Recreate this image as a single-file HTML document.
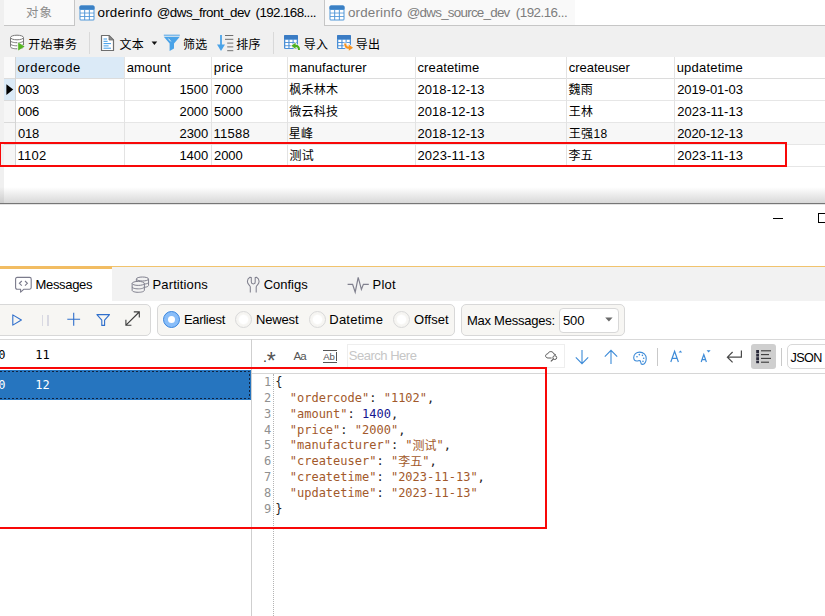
<!DOCTYPE html>
<html><head><meta charset="utf-8"><title>orderinfo</title>
<style>
html,body{margin:0;padding:0;}
body{width:825px;height:616px;position:relative;overflow:hidden;background:#fff;font-family:"Liberation Sans","Noto Sans CJK SC",sans-serif;font-size:13px;color:#000;}
.a{position:absolute;box-sizing:border-box;}
.t{position:absolute;white-space:nowrap;line-height:20px;height:20px;}
.c{position:absolute;white-space:pre;font-family:"DejaVu Sans Mono","Liberation Mono","Noto Sans CJK SC",monospace;font-size:12px;line-height:16px;height:16px;}
.g{width:15.6px;text-align:right;color:#909090;}
.k{color:#a2592b}.j{position:relative;top:1px}.n{color:#15158f}.p{color:#222}
svg{position:absolute;overflow:visible;}
</style></head><body>
<!-- ===== top tab bar ===== -->
<div class="a" style="left:0;top:0;width:825px;height:26px;background:#fff;border-bottom:1px solid #c6c6c6;"></div>
<div class="a" style="left:0;top:0;width:4px;height:204px;background:#f0f0f0;"></div>
<div class="a" style="left:4px;top:0;width:71px;height:26px;background:#f9f9f9;border-right:1px solid #c6c6c6;border-bottom:1px solid #c6c6c6;"></div>
<div class="a" style="left:75px;top:0;width:249px;height:26px;background:#f0f0f0;"></div>
<div class="a" style="left:324px;top:0;width:251px;height:26px;background:#f9f9f9;border-left:1px solid #c6c6c6;border-bottom:1px solid #c6c6c6;"></div>
<!-- table icons in tabs -->
<svg style="left:79px;top:5px;" width="16" height="16" viewBox="0 0 16 16"><rect x="0.5" y="0.5" width="15" height="15" rx="1.5" fill="#5197d8"/><path d="M0.5 4.3 V2 Q0.5 0.5 2 0.5 H14 Q15.5 0.5 15.5 2 V4.3 Z" fill="#3b80c4"/><g fill="#fff"><rect x="1.50" y="5.00" width="3.67" height="2.6"/><rect x="6.17" y="5.00" width="3.67" height="2.6"/><rect x="10.83" y="5.00" width="3.67" height="2.6"/><rect x="1.50" y="8.45" width="3.67" height="2.6"/><rect x="6.17" y="8.45" width="3.67" height="2.6"/><rect x="10.83" y="8.45" width="3.67" height="2.6"/><rect x="1.50" y="11.90" width="3.67" height="2.6"/><rect x="6.17" y="11.90" width="3.67" height="2.6"/><rect x="10.83" y="11.90" width="3.67" height="2.6"/></g></svg>
<svg style="left:329px;top:5px;" width="16" height="16" viewBox="0 0 16 16"><rect x="0.5" y="0.5" width="15" height="15" rx="1.5" fill="#5197d8"/><path d="M0.5 4.3 V2 Q0.5 0.5 2 0.5 H14 Q15.5 0.5 15.5 2 V4.3 Z" fill="#3b80c4"/><g fill="#fff"><rect x="1.50" y="5.00" width="3.67" height="2.6"/><rect x="6.17" y="5.00" width="3.67" height="2.6"/><rect x="10.83" y="5.00" width="3.67" height="2.6"/><rect x="1.50" y="8.45" width="3.67" height="2.6"/><rect x="6.17" y="8.45" width="3.67" height="2.6"/><rect x="10.83" y="8.45" width="3.67" height="2.6"/><rect x="1.50" y="11.90" width="3.67" height="2.6"/><rect x="6.17" y="11.90" width="3.67" height="2.6"/><rect x="10.83" y="11.90" width="3.67" height="2.6"/></g></svg>
<!-- ===== toolbar ===== -->
<div class="a" style="left:0;top:26px;width:825px;height:31px;background:#f0f0f0;"></div>
<div class="a" style="left:89px;top:32px;width:1px;height:22px;background:#d9d9d9;"></div>
<div class="a" style="left:273px;top:32px;width:1px;height:22px;background:#d9d9d9;"></div>
<!-- db + play icon -->
<svg style="left:9px;top:34px;" width="17" height="18" viewBox="0 0 17 18"><path d="M1.5 3.5 V12.6 C1.5 14 4.4 14.8 8 14.8 C11.6 14.8 14.5 14 14.5 12.6 V3.5" fill="#fff" stroke="#787878" stroke-width="1"/><ellipse cx="8" cy="3.5" rx="6.5" ry="2.3" fill="#fff" stroke="#787878" stroke-width="1"/><path d="M1.5 6.6 C1.5 7.9 4.4 8.7 8 8.7 C11.6 8.7 14.5 7.9 14.5 6.6 M1.5 9.7 C1.5 11 4.4 11.8 8 11.8 C11.6 11.8 14.5 11 14.5 9.7" fill="none" stroke="#787878" stroke-width="1"/><path d="M8.2 7.6 L16.4 12.2 L8.2 17 Z" fill="#f0f0f0"/><path d="M9.2 8.6 L15.6 12.4 L9.2 16.6 Z" fill="#55b424"/></svg>
<!-- document icon -->
<svg style="left:100px;top:34px;" width="15" height="18" viewBox="0 0 15 18"><path d="M1.5 1.5 H9 L13.5 6 V16.5 H1.5 Z" fill="#fff" stroke="#6e6e6e" stroke-width="1.2" stroke-linejoin="round"/><path d="M9 1.5 V6 H13.5 Z" fill="#8a8a8a" stroke="#6e6e6e" stroke-width="0.8" stroke-linejoin="round"/><g stroke="#3d9be8" stroke-width="1"><path d="M3.5 5 H7"/><path d="M3.5 7.3 H7.6"/><path d="M3.5 9.6 H11"/><path d="M3.5 11.9 H8.6"/><path d="M3.5 14.2 H11"/></g></svg>
<!-- dropdown arrow -->
<svg style="left:151px;top:41px;" width="7" height="5" viewBox="0 0 7 5"><path d="M0.6 0.6 H6.2 L3.4 4 Z" fill="#111"/></svg>
<!-- filter icon -->
<svg style="left:163px;top:34px;" width="18" height="18" viewBox="0 0 18 18"><path d="M0.8 1.2 H16.8" stroke="#4aa3e8" stroke-width="1" /><path d="M0.8 2.8 H16.8 L11 9.6 V14.6 L6.6 16.9 V9.6 Z" fill="#4aa3e8"/><path d="M5.4 4.6 L7.8 7.4" stroke="#f0f0f0" stroke-width="1"/></svg>
<!-- sort icon -->
<svg style="left:217px;top:34px;" width="17" height="18" viewBox="0 0 17 18"><path d="M4 1 V12" stroke="#4aa3e8" stroke-width="1.8"/><path d="M0 10.6 H8 L4 17 Z" fill="#4aa3e8"/><g stroke="#6f6f6f" stroke-width="1"><path d="M8 1.5 H16.3"/><path d="M8 5.3 H16.3"/><path d="M10.2 9.1 H16.3"/><path d="M10.2 12.9 H16.3"/><path d="M10.2 16.7 H16.3"/></g></svg>
<!-- import icon -->
<svg style="left:284px;top:34px;" width="18" height="18" viewBox="0 0 18 18"><rect x="0" y="1" width="14" height="14" rx="1.3" fill="#4a8fd6"/><path d="M0 5 V2.3 Q0 1 1.3 1 H12.7 Q14 1 14 2.3 V5 Z" fill="#3b7cc4"/><g fill="#fff"><rect x="1.3" y="5.8" width="3.1" height="2.3"/><rect x="5.5" y="5.8" width="3.1" height="2.3"/><rect x="9.6" y="5.8" width="3.1" height="2.3"/><rect x="1.3" y="9.0" width="3.1" height="2.3"/><rect x="5.5" y="9.0" width="3.1" height="2.3"/><rect x="9.6" y="9.0" width="3.1" height="2.3"/><rect x="1.3" y="12.2" width="3.1" height="1.8"/><rect x="5.5" y="12.2" width="3.1" height="1.8"/><rect x="9.6" y="12.2" width="3.1" height="1.8"/></g><path d="M7.4 11.8 L11.6 8.8 V10.8 C14.6 10.8 16.2 12.8 16 15.9 H14 C14 13.9 13.2 12.9 11.6 12.9 V14.9 Z" fill="#4cb01f" stroke="#f0f0f0" stroke-width="1.6" paint-order="stroke" stroke-linejoin="round"/></svg>
<!-- export icon -->
<svg style="left:337px;top:34px;" width="18" height="18" viewBox="0 0 18 18"><rect x="0" y="1" width="14" height="14" rx="1.3" fill="#4a8fd6"/><path d="M0 5 V2.3 Q0 1 1.3 1 H12.7 Q14 1 14 2.3 V5 Z" fill="#3b7cc4"/><g fill="#fff"><rect x="1.3" y="5.8" width="3.1" height="2.3"/><rect x="5.5" y="5.8" width="3.1" height="2.3"/><rect x="9.6" y="5.8" width="3.1" height="2.3"/><rect x="1.3" y="9.0" width="3.1" height="2.3"/><rect x="5.5" y="9.0" width="3.1" height="2.3"/><rect x="9.6" y="9.0" width="3.1" height="2.3"/><rect x="1.3" y="12.2" width="3.1" height="1.8"/><rect x="5.5" y="12.2" width="3.1" height="1.8"/><rect x="9.6" y="12.2" width="3.1" height="1.8"/></g><path d="M7.2 9.4 H9.2 C9.2 11.6 10.2 12.6 11.8 12.6 V10.6 L16 13.7 L11.8 16.8 V14.8 C8.8 14.8 7.2 12.6 7.2 9.4 Z" fill="#f7931e" stroke="#f0f0f0" stroke-width="1.6" paint-order="stroke" stroke-linejoin="round"/></svg>
<!-- ===== grid ===== -->
<div class="a" style="left:4px;top:57px;width:821px;height:110px;background:#fff;"></div>
<div class="a" style="left:4px;top:57px;width:12px;height:21px;background:#fafafa;"></div>
<div class="a" style="left:16px;top:57px;width:108px;height:21px;background:#dbeaf7;"></div>
<div class="a" style="left:4px;top:79px;width:12px;height:21px;background:#dbeaf7;"></div>
<div class="a" style="left:4px;top:101px;width:12px;height:65px;background:#f6f6f6;"></div>
<div class="a" style="left:16px;top:123px;width:809px;height:21px;background:#f7f7f7;"></div>
<!-- horizontal lines -->
<div class="a" style="left:4px;top:78px;width:821px;height:1px;background:#dcdcdc;"></div>
<div class="a" style="left:4px;top:100px;width:821px;height:1px;background:#e6e6e6;"></div>
<div class="a" style="left:4px;top:122px;width:821px;height:1px;background:#e6e6e6;"></div>
<div class="a" style="left:4px;top:144px;width:821px;height:1px;background:#e6e6e6;"></div>
<div class="a" style="left:4px;top:166px;width:821px;height:1px;background:#e6e6e6;"></div>
<div class="a" style="left:4px;top:100px;width:12px;height:1px;background:#dadada;"></div>
<div class="a" style="left:4px;top:122px;width:12px;height:1px;background:#dadada;"></div>
<div class="a" style="left:4px;top:144px;width:12px;height:1px;background:#dadada;"></div>
<!-- vertical lines -->
<div class="a" style="left:15px;top:57px;width:1px;height:109px;background:#d4d4d4;"></div>
<div class="a" style="left:124px;top:57px;width:1px;height:109px;background:#e3e3e3;"></div>
<div class="a" style="left:211px;top:57px;width:1px;height:109px;background:#e3e3e3;"></div>
<div class="a" style="left:287px;top:57px;width:1px;height:109px;background:#e3e3e3;"></div>
<div class="a" style="left:415px;top:57px;width:1px;height:109px;background:#e3e3e3;"></div>
<div class="a" style="left:566px;top:57px;width:1px;height:109px;background:#e3e3e3;"></div>
<div class="a" style="left:674px;top:57px;width:1px;height:109px;background:#e3e3e3;"></div>
<!-- current row marker -->
<svg style="left:6px;top:84px;" width="8" height="12" viewBox="0 0 8 12"><path d="M0.4 0.2 L7.2 5.6 L0.4 11 Z" fill="#000"/></svg>
<!-- ===== bottom of upper window: shadow ===== -->
<div class="a" style="left:4px;top:187px;width:821px;height:16px;background:linear-gradient(#ffffff,#d8d8d8);"></div>
<div class="a" style="left:0;top:187px;width:4px;height:16px;background:linear-gradient(#f0f0f0,#cdcdcd);"></div>
<div class="a" style="left:0;top:203px;width:825px;height:1px;background:#767676;"></div>
<div class="a" style="left:0;top:204px;width:825px;height:1px;background:#e4e4e4;"></div>
<!-- window controls -->
<div class="a" style="left:773px;top:218px;width:10px;height:1px;background:#000;"></div>
<div class="a" style="left:818px;top:213px;width:12px;height:10px;border:1px solid #000;"></div>
<!-- ===== bottom tab bar ===== -->
<div class="a" style="left:0;top:266px;width:825px;height:35px;background:#f2f2f2;border-top:1px solid #f1c36d;"></div>
<div class="a" style="left:0;top:266px;width:112px;height:35px;background:#fff;border-top:3px solid #f2bd63;"></div>
<!-- messages icon -->
<svg style="left:15px;top:276px;" width="18" height="18" viewBox="0 0 18 18"><path d="M2.2 1.4 H14.6 Q16.2 1.4 16.2 3 V11.6 Q16.2 13.2 14.6 13.2 H9 L5.6 16.2 V13.2 H2.2 Q0.6 13.2 0.6 11.6 V3 Q0.6 1.4 2.2 1.4 Z" fill="#fff" stroke="#7b7b8c" stroke-width="1.1" stroke-linejoin="round"/><path d="M6.8 5 L4.4 7.3 L6.8 9.6 M10 5 L12.4 7.3 L10 9.6" fill="none" stroke="#7b7b8c" stroke-width="1.1"/></svg>
<!-- partitions icon -->
<svg style="left:131px;top:276px;" width="19" height="18" viewBox="0 0 19 18"><g fill="#f2f2f2" stroke="#80808e" stroke-width="1"><path d="M5.35 3.00 V9.40 C5.35 10.60 8.09 11.40 11.45 11.40 C14.80 11.40 17.55 10.60 17.55 9.40 V3.00"/><ellipse cx="11.45" cy="3.00" rx="6.10" ry="2.00"/><path d="M5.35 6.20 C5.35 7.40 8.09 8.20 11.45 8.20 C14.80 8.20 17.55 7.40 17.55 6.20" fill="none"/><path d="M1.15 7.40 V14.30 C1.15 15.50 3.90 16.30 7.25 16.30 C10.61 16.30 13.35 15.50 13.35 14.30 V7.40"/><ellipse cx="7.25" cy="7.40" rx="6.10" ry="2.00"/><path d="M1.15 10.85 C1.15 12.05 3.90 12.85 7.25 12.85 C10.61 12.85 13.35 12.05 13.35 10.85" fill="none"/></g></svg>
<!-- configs icon (wrench) -->
<svg style="left:246px;top:276px;" width="15" height="18" viewBox="0 0 15 18"><path d="M4.3 16.6 V11 C4.3 9.4 1.4 8.6 1.4 5.6 C1.4 3.6 2.4 2 3.9 1.2 L5.3 1.6 V6 A1.95 1.95 0 0 0 9.2 6 V1.6 L10.6 1.2 C12.1 2 13.1 3.6 13.1 5.6 C13.1 8.6 10.2 9.4 10.2 11 V16.6" fill="none" stroke="#80808e" stroke-width="1.05" stroke-linejoin="round"/></svg>
<!-- plot icon -->
<svg style="left:347px;top:276px;" width="23" height="18" viewBox="0 0 23 18"><path d="M0.6 8.3 H5.6 L8.2 16.2 L11.2 1.4 L14.4 13.4 L16.4 8.3 H21.8" fill="none" stroke="#80808e" stroke-width="1.2" stroke-linejoin="miter"/></svg>
<!-- ===== second toolbar ===== -->
<div class="a" style="left:-8px;top:304px;width:159px;height:32px;background:#f7f6f3;border:1px solid #d8d8d8;border-radius:5px;"></div>
<div class="a" style="left:157px;top:304px;width:298px;height:32px;background:#f7f6f3;border:1px solid #d8d8d8;border-radius:5px;"></div>
<div class="a" style="left:461px;top:304px;width:164px;height:32px;background:#f7f6f3;border:1px solid #d8d8d8;border-radius:5px;"></div>
<!-- play -->
<svg style="left:12px;top:314px;" width="11" height="13" viewBox="0 0 11 13"><path d="M0.8 0.9 L9.4 6 L0.8 11.1 Z" fill="none" stroke="#2f6fcc" stroke-width="1.1" stroke-linejoin="round"/></svg>
<!-- pause -->
<div class="a" style="left:41.5px;top:314.5px;width:1.6px;height:11px;background:#d9d9e2;"></div>
<div class="a" style="left:47px;top:314.5px;width:1.6px;height:11px;background:#d9d9e2;"></div>
<!-- plus -->
<svg style="left:67px;top:312px;" width="14" height="15" viewBox="0 0 14 15"><path d="M6.7 0.8 V13.8 M0.3 7.3 H13.1" stroke="#2f6fcc" stroke-width="1.1" fill="none"/></svg>
<!-- filter outline -->
<svg style="left:96px;top:313px;" width="15" height="14" viewBox="0 0 15 14"><path d="M0.9 1.6 H13.5 L8.6 7.2 V12.4 H5.8 V7.2 Z" fill="none" stroke="#2f6fcc" stroke-width="1.1" stroke-linejoin="round"/></svg>
<!-- expand -->
<svg style="left:124.6px;top:311.4px;" width="16" height="16" viewBox="0 0 16 16"><path d="M1 14.2 L14.2 1 M8.8 0.9 H14.3 V6.4 M0.9 8.8 V14.3 H6.4" fill="none" stroke="#3c3c3c" stroke-width="1.1"/></svg>
<!-- radios -->
<div class="a" style="left:163px;top:311px;width:17px;height:17px;border-radius:50%;background:#88bdf9;border:1px solid #3a85dc;box-shadow:0 0 0 1px #fbfbfa;"></div>
<div class="a" style="left:168px;top:316px;width:7px;height:7px;border-radius:50%;background:#fff;"></div>
<div class="a" style="left:235px;top:311px;width:17px;height:17px;border-radius:50%;background:radial-gradient(circle,#ffffff 0,#ffffff 38%,#f6f5f2 52%);border:1px solid #d9d9d9;"></div>
<div class="a" style="left:309px;top:311px;width:17px;height:17px;border-radius:50%;background:radial-gradient(circle,#ffffff 0,#ffffff 38%,#f6f5f2 52%);border:1px solid #d9d9d9;"></div>
<div class="a" style="left:393px;top:311px;width:17px;height:17px;border-radius:50%;background:radial-gradient(circle,#ffffff 0,#ffffff 38%,#f6f5f2 52%);border:1px solid #d9d9d9;"></div>
<!-- combo -->
<div class="a" style="left:559px;top:308px;width:60px;height:25px;background:#fff;border:1px solid #d8d8d8;border-radius:4px;"></div>
<svg style="left:605px;top:317px;" width="8" height="5" viewBox="0 0 8 5"><path d="M0.2 0.4 H7.6 L3.9 4.6 Z" fill="#6a6a6a"/></svg>
<!-- line under toolbar -->
<div class="a" style="left:0;top:339px;width:825px;height:1px;background:#d9d9d9;"></div>
<!-- ===== list panel ===== -->
<div class="a" style="left:0;top:370px;width:251px;height:30px;background:#2675bf;"></div>
<svg style="left:0;top:370px;" width="251" height="30" viewBox="0 0 251 30"><path d="M0 1.5 H249.5 V28.5 H0" fill="none" stroke="#10223f" stroke-width="1" stroke-dasharray="2 2"/></svg>
<div class="a" style="left:251px;top:339px;width:1px;height:277px;background:#cfcfcf;"></div>
<!-- ===== search toolbar ===== -->
<div class="a" style="left:347px;top:344px;width:217.5px;height:23.5px;border:1px solid #eeeeee;background:#fff;"></div>
<div class="a" style="left:252px;top:373px;width:573px;height:1px;background:#d6d6d6;"></div>
<!-- Abl over/under lines -->
<div class="a" style="left:323px;top:350px;width:14px;height:1px;background:#555;"></div>
<div class="a" style="left:323px;top:362px;width:14px;height:1px;background:#555;"></div>
<div class="a" style="left:335.5px;top:352px;width:1px;height:9px;background:#555;"></div>
<!-- cloud search icon -->
<svg style="left:545px;top:351px;" width="13" height="12" viewBox="0 0 13 12"><path d="M6.6 7 H3.1 C1.6 7 0.6 6.1 0.6 4.9 C0.6 3.7 1.6 2.8 2.8 2.8 C3.2 1.5 4.3 0.6 5.8 0.6 C7.4 0.6 8.7 1.7 8.9 3.1 C9.8 3.1 10.6 3.5 11 4.2" fill="none" stroke="#5a5a5a" stroke-width="1"/><circle cx="9.8" cy="6.6" r="1.9" fill="none" stroke="#5a5a5a" stroke-width="1"/><path d="M8.5 8 L5.8 10.4" stroke="#5a5a5a" stroke-width="1.1"/></svg>
<!-- arrows -->
<svg style="left:575px;top:349px;" width="14" height="16" viewBox="0 0 14 16"><path d="M7 1 V14.4 M0.8 8.4 L7 14.6 L13.2 8.4" fill="none" stroke="#3d8bd8" stroke-width="1.1"/></svg>
<svg style="left:604px;top:349px;" width="14" height="16" viewBox="0 0 14 16"><path d="M7 15 V1.6 M0.8 7.6 L7 1.4 L13.2 7.6" fill="none" stroke="#3d8bd8" stroke-width="1.1"/></svg>
<!-- palette -->
<svg style="left:633px;top:350.5px;" width="14.5" height="14.5" viewBox="0 0 16 16"><path d="M7.4 1.2 C3.6 1.2 0.8 4 0.8 7.2 C0.8 9.6 2.4 11 4.2 11 C5.4 11 6.2 10.6 7 10.6 C8 10.6 8.6 11.4 8.6 12.6 C8.6 13.8 9.4 14.8 10.6 14.8 C12.8 14.8 14.6 11.8 14.6 8.2 C14.6 4 11.4 1.2 7.4 1.2 Z" fill="none" stroke="#3d8bd8" stroke-width="1.2"/><g fill="#3d8bd8"><circle cx="4.4" cy="6.4" r="0.9"/><circle cx="7" cy="4" r="0.9"/><circle cx="10.4" cy="4.8" r="0.9"/><circle cx="11.8" cy="8" r="0.9"/><circle cx="11" cy="11.4" r="0.9"/></g></svg>
<div class="a" style="left:657px;top:348px;width:1px;height:18px;background:#c9c9c9;"></div>
<!-- A up / A down -->
<svg style="left:670px;top:349px;" width="14" height="15" viewBox="0 0 14 15"><path d="M0.8 13 L4.6 2.4 L8.4 13 M2.2 9.4 H7" fill="none" stroke="#3d8bd8" stroke-width="1.2"/><path d="M8.6 3.6 L10.4 1.4 L12.2 3.6 Z" fill="#3d8bd8"/></svg>
<svg style="left:700px;top:349px;" width="13" height="15" viewBox="0 0 13 15"><path d="M1.2 13 L3.8 5.6 L6.4 13 M2.2 10.6 H5.4" fill="none" stroke="#3d8bd8" stroke-width="1.2"/><path d="M6.6 1.2 L10.6 1.2 L8.6 3.4 Z" fill="#3d8bd8"/></svg>
<!-- wrap icon -->
<svg style="left:726px;top:350px;" width="17" height="14" viewBox="0 0 17 14"><path d="M15.4 0.6 V7.2 H1.6 M6.6 2 L1.4 7.2 L6.6 12.4" fill="none" stroke="#4a4a4a" stroke-width="1.2"/></svg>
<!-- active list button -->
<div class="a" style="left:751px;top:344px;width:25px;height:25px;background:#cfcfcf;border-radius:3px;"></div>
<svg style="left:756px;top:350px;" width="16" height="14" viewBox="0 0 16 14"><g fill="#2a2a3a"><rect x="0.2" y="0" width="2.8" height="3"/><rect x="0.2" y="3.6" width="2.8" height="3"/><rect x="0.2" y="7.2" width="2.8" height="3"/><rect x="0.2" y="10.8" width="2.8" height="2.4"/></g><g stroke="#3a3a3a" stroke-width="1.1"><path d="M5 0.8 H15"/><path d="M5 4.6 H13"/><path d="M5 8.4 H15"/><path d="M5 12.2 H13"/></g></svg>
<div class="a" style="left:781px;top:348px;width:1px;height:18px;background:#c9c9c9;"></div>
<div class="a" style="left:787px;top:344px;width:50px;height:25px;background:#fff;border:1px solid #d8d8d8;border-radius:5px;"></div>
<!-- editor gutter dotted line -->
<div class="a" style="left:273px;top:374px;width:0;height:242px;border-left:1px dotted #b4b4b4;"></div>
<div class="t" id="t0" style="left:25.90px;top:3px;font-size:12.4px;color:#8c8c8c;letter-spacing:1.284px;">对象</div>
<div class="t" id="t1" style="left:97.46px;top:3px;font-size:13.4px;color:#000;letter-spacing:0.227px;">orderinfo</div>
<div class="t" id="t2" style="left:156.77px;top:3px;font-size:13.4px;color:#000;letter-spacing:-0.530px;">@dws_front_dev</div>
<div class="t" id="t3" style="left:255.62px;top:3px;font-size:13.4px;color:#000;letter-spacing:-0.622px;">(192.168....</div>
<div class="t" id="t4" style="left:347.89px;top:3px;font-size:13.4px;color:#7d7d7d;letter-spacing:0.184px;">orderinfo</div>
<div class="t" id="t5" style="left:406.77px;top:3px;font-size:13.4px;color:#7d7d7d;letter-spacing:-0.753px;">@dws_source_dev</div>
<div class="t" id="t6" style="left:515.79px;top:3px;font-size:13.4px;color:#7d7d7d;letter-spacing:-0.528px;">(192.16...</div>
<div class="t" id="t7" style="left:28.32px;top:35px;font-size:12px;color:#000;letter-spacing:0.250px;">开始事务</div>
<div class="t" id="t8" style="left:119.41px;top:35px;font-size:12px;color:#000;letter-spacing:0.250px;">文本</div>
<div class="t" id="t9" style="left:183.08px;top:35px;font-size:12px;color:#000;letter-spacing:0.250px;">筛选</div>
<div class="t" id="t10" style="left:236.28px;top:35px;font-size:12px;color:#000;letter-spacing:0.250px;">排序</div>
<div class="t" id="t11" style="left:303.78px;top:35px;font-size:12px;color:#000;letter-spacing:0.250px;">导入</div>
<div class="t" id="t12" style="left:355.85px;top:35px;font-size:12px;color:#000;letter-spacing:0.250px;">导出</div>
<div class="t" id="t13" style="left:17.62px;top:58px;font-size:13px;color:#000;letter-spacing:0.515px;">ordercode</div>
<div class="t" id="t14" style="left:126.74px;top:58px;font-size:13px;color:#000;letter-spacing:0.136px;">amount</div>
<div class="t" id="t15" style="left:213.80px;top:58px;font-size:13px;color:#000;letter-spacing:0.258px;">price</div>
<div class="t" id="t16" style="left:289.30px;top:58px;font-size:13px;color:#000;letter-spacing:0.068px;">manufacturer</div>
<div class="t" id="t17" style="left:417.49px;top:58px;font-size:13px;color:#000;letter-spacing:0.112px;">createtime</div>
<div class="t" id="t18" style="left:568.82px;top:58px;font-size:13px;color:#000;letter-spacing:-0.038px;">createuser</div>
<div class="t" id="t19" style="left:676.67px;top:58px;font-size:13px;color:#000;letter-spacing:0.203px;">updatetime</div>
<div class="t" id="t20" style="left:18.02px;top:80px;font-size:13px;color:#000;letter-spacing:-0.187px;">003</div>
<div class="t" id="t21" style="left:179.45px;top:80px;font-size:13px;color:#000;letter-spacing:-0.069px;">1500</div>
<div class="t" id="t22" style="left:214.02px;top:80px;font-size:13px;color:#000;letter-spacing:-0.079px;">7000</div>
<div class="t" id="t23" style="left:289.30px;top:80px;font-size:12px;color:#000;letter-spacing:0.250px;">枫禾林木</div>
<div class="t" id="t24" style="left:417.43px;top:80px;font-size:13px;color:#000;letter-spacing:0.074px;">2018-12-13</div>
<div class="t" id="t25" style="left:568.56px;top:80px;font-size:12px;color:#000;letter-spacing:0.250px;">魏雨</div>
<div class="t" id="t26" style="left:677.16px;top:80px;font-size:13px;color:#000;letter-spacing:-0.086px;">2019-01-03</div>
<div class="t" id="t27" style="left:18.02px;top:102px;font-size:13px;color:#000;letter-spacing:-0.234px;">006</div>
<div class="t" id="t28" style="left:179.60px;top:102px;font-size:13px;color:#000;letter-spacing:-0.120px;">2000</div>
<div class="t" id="t29" style="left:213.90px;top:102px;font-size:13px;color:#000;letter-spacing:-0.040px;">5000</div>
<div class="t" id="t30" style="left:289.22px;top:102px;font-size:12px;color:#000;letter-spacing:0.250px;">微云科技</div>
<div class="t" id="t31" style="left:417.43px;top:102px;font-size:13px;color:#000;letter-spacing:0.074px;">2018-12-13</div>
<div class="t" id="t32" style="left:568.63px;top:102px;font-size:12px;color:#000;letter-spacing:0.250px;">王林</div>
<div class="t" id="t33" style="left:677.16px;top:102px;font-size:13px;color:#000;letter-spacing:0.025px;">2023-11-13</div>
<div class="t" id="t34" style="left:18.02px;top:124px;font-size:13px;color:#000;letter-spacing:-0.215px;">018</div>
<div class="t" id="t35" style="left:179.60px;top:124px;font-size:13px;color:#000;letter-spacing:-0.120px;">2300</div>
<div class="t" id="t36" style="left:213.58px;top:124px;font-size:13px;color:#000;letter-spacing:0.258px;">11588</div>
<div class="t" id="t37" style="left:288.85px;top:124px;font-size:12px;color:#000;letter-spacing:0.250px;">星峰</div>
<div class="t" id="t38" style="left:417.43px;top:124px;font-size:13px;color:#000;letter-spacing:0.074px;">2018-12-13</div>
<div class="t" id="t39" style="left:568.63px;top:124px;font-size:12px;color:#000;letter-spacing:0.405px;">王强18</div>
<div class="t" id="t40" style="left:677.16px;top:124px;font-size:13px;color:#000;letter-spacing:-0.086px;">2020-12-13</div>
<div class="t" id="t41" style="left:17.60px;top:146px;font-size:13px;color:#000;letter-spacing:0.240px;">1102</div>
<div class="t" id="t42" style="left:179.45px;top:146px;font-size:13px;color:#000;letter-spacing:-0.069px;">1400</div>
<div class="t" id="t43" style="left:214.02px;top:146px;font-size:13px;color:#000;letter-spacing:-0.079px;">2000</div>
<div class="t" id="t44" style="left:289.44px;top:146px;font-size:12px;color:#000;letter-spacing:0.250px;">测试</div>
<div class="t" id="t45" style="left:417.43px;top:146px;font-size:13px;color:#000;letter-spacing:0.185px;">2023-11-13</div>
<div class="t" id="t46" style="left:568.53px;top:146px;font-size:12px;color:#000;letter-spacing:0.250px;">李五</div>
<div class="t" id="t47" style="left:677.16px;top:146px;font-size:13px;color:#000;letter-spacing:0.025px;">2023-11-13</div>
<div class="t" id="t48" style="left:35.59px;top:275px;font-size:13px;color:#000;letter-spacing:-0.344px;">Messages</div>
<div class="t" id="t49" style="left:152.59px;top:275px;font-size:13px;color:#000;letter-spacing:0.113px;">Partitions</div>
<div class="t" id="t50" style="left:263.70px;top:275px;font-size:13px;color:#000;letter-spacing:-0.007px;">Configs</div>
<div class="t" id="t51" style="left:372.59px;top:275px;font-size:13px;color:#000;letter-spacing:0.202px;">Plot</div>
<div class="t" id="t52" style="left:183.88px;top:310px;font-size:13px;color:#000;letter-spacing:-0.281px;">Earliest</div>
<div class="t" id="t53" style="left:255.95px;top:310px;font-size:13px;color:#000;letter-spacing:-0.142px;">Newest</div>
<div class="t" id="t54" style="left:329.27px;top:310px;font-size:13px;color:#000;letter-spacing:0.233px;">Datetime</div>
<div class="t" id="t55" style="left:414.11px;top:310px;font-size:13px;color:#000;letter-spacing:-0.005px;">Offset</div>
<div class="t" id="t56" style="left:466.88px;top:311px;font-size:13px;color:#000;letter-spacing:-0.238px;">Max Messages:</div>
<div class="t" id="t57" style="left:562.88px;top:311px;font-size:13px;color:#000;letter-spacing:-0.038px;">500</div>
<div class="t" id="t58" style="left:348.79px;top:346px;font-size:13px;color:#c6c6c6;letter-spacing:-0.490px;">Search Here</div>
<div class="t" id="t59" style="left:790.58px;top:348px;font-size:12.6px;color:#000;letter-spacing:-0.640px;">JSON</div>
<div class="t" id="t60" style="left:293.61px;top:346px;font-size:11.5px;color:#555;letter-spacing:-1.065px;">Aa</div>
<div class="t" id="t61" style="left:323.35px;top:347px;font-size:9.6px;color:#555;letter-spacing:-0.348px;">Ab</div>
<div class="t" id="t62" style="left:263.12px;top:347px;font-size:14px;color:#3a3a3a;letter-spacing:0.000px;">.</div>
<div class="t" id="t63" style="left:266.81px;top:351px;font-size:23px;color:#555;letter-spacing:0.000px;font-family:"DejaVu Sans",sans-serif;">*</div>
<!-- list rows text -->
<div class="c" style="left:-1.8px;top:346.6px;color:#000;">0</div>
<div class="c" style="left:35.2px;top:346.6px;color:#000;">11</div>
<div class="c" style="left:-1.8px;top:376.6px;color:#fff;">0</div>
<div class="c" style="left:35.2px;top:376.6px;color:#fff;">12</div>
<!-- code editor -->
<div class="c g" style="left:255.6px;top:374px;">1</div>
<div class="c p" style="left:275.3px;top:374px;">{</div>
<div class="c g" style="left:255.6px;top:390px;">2</div>
<div class="c p" style="left:275.3px;top:390px;">  <span class="k">"ordercode"</span>: <span class="k">"1102"</span>,</div>
<div class="c g" style="left:255.6px;top:406px;">3</div>
<div class="c p" style="left:275.3px;top:406px;">  <span class="k">"amount"</span>: <span class="n">1400</span>,</div>
<div class="c g" style="left:255.6px;top:422px;">4</div>
<div class="c p" style="left:275.3px;top:422px;">  <span class="k">"price"</span>: <span class="k">"2000"</span>,</div>
<div class="c g" style="left:255.6px;top:437px;">5</div>
<div class="c p" style="left:275.3px;top:437px;">  <span class="k">"manufacturer"</span>: <span class="k">"<span class="j">测试</span>"</span>,</div>
<div class="c g" style="left:255.6px;top:453px;">6</div>
<div class="c p" style="left:275.3px;top:453px;">  <span class="k">"createuser"</span>: <span class="k">"<span class="j">李五</span>"</span>,</div>
<div class="c g" style="left:255.6px;top:469px;">7</div>
<div class="c p" style="left:275.3px;top:469px;">  <span class="k">"createtime"</span>: <span class="k">"2023-11-13"</span>,</div>
<div class="c g" style="left:255.6px;top:485px;">8</div>
<div class="c p" style="left:275.3px;top:485px;">  <span class="k">"updatetime"</span>: <span class="k">"2023-11-13"</span></div>
<div class="c g" style="left:255.6px;top:501px;">9</div>
<div class="c p" style="left:275.3px;top:501px;">}</div>
<!-- red highlight rectangles -->
<div class="a" style="left:-1px;top:142px;width:788px;height:25px;border:2px solid #f80808;"></div>
<div class="a" style="left:-4px;top:367px;width:551px;height:162px;border:2px solid #f80808;"></div>
</body></html>
